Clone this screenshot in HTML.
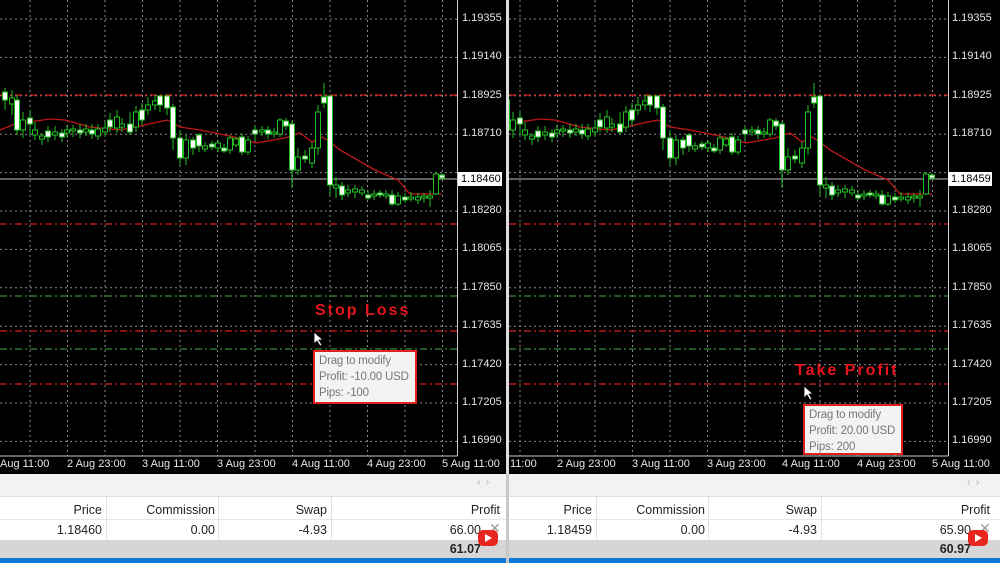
<!DOCTYPE html>
<html><head><meta charset="utf-8"><style>
body{margin:0;width:1000px;height:563px;overflow:hidden;background:#000;font-family:"Liberation Sans",sans-serif;position:relative}
.a{position:absolute}
.pl{font-size:11px;color:#e6e6e6}
.tl{font-size:11px;color:#e6e6e6;top:458px}
.tip{position:absolute;background:#f3f3f3;border:2px solid #e0201c;color:#777;font-size:11.5px;letter-spacing:-0.2px;line-height:16px;padding:1px 4px;box-sizing:border-box;white-space:nowrap;overflow:hidden}
.lbl{position:absolute;color:#e8161c;font-weight:bold;font-size:16px;letter-spacing:2px}
.cell{position:absolute;font-size:12.5px;color:#222;text-align:right}
</style></head><body>
<svg class="a" style="left:0;top:0" width="1000" height="475" id="s"></svg>
<div id="txt"></div>
<div class="a" style="left:0;top:474px;width:1000px;height:89px;background:#f2f2f2"></div>
<div class="a" style="left:0;top:496px;width:1000px;height:45px;background:#fff"></div>
<div class="a" style="left:0;top:496px;width:1000px;height:1px;background:#ddd"></div>
<div class="a" style="left:0;top:519px;width:1000px;height:1px;background:#e6e6e6"></div>
<div class="a" style="left:0;top:540px;width:1000px;height:18px;background:#d6d6d6"></div>
<div class="a" style="left:0;top:558px;width:1000px;height:5px;background:#0a78d6"></div>
<div class="a" style="left:506px;top:474px;width:3px;height:89px;background:#c8c8c8"></div>
<div class="a" style="left:106px;top:497px;width:1px;height:43px;background:#e2e2e2"></div>
<div class="a" style="left:218px;top:497px;width:1px;height:43px;background:#e2e2e2"></div>
<div class="a" style="left:331px;top:497px;width:1px;height:43px;background:#e2e2e2"></div>
<div class="a" style="left:596px;top:497px;width:1px;height:43px;background:#e2e2e2"></div>
<div class="a" style="left:708px;top:497px;width:1px;height:43px;background:#e2e2e2"></div>
<div class="a" style="left:821px;top:497px;width:1px;height:43px;background:#e2e2e2"></div>
<div class="a" style="left:477px;top:477px;font-size:10px;color:#aaa">‹ &nbsp;›</div>
<div class="a" style="left:967px;top:477px;font-size:10px;color:#aaa">‹ &nbsp;›</div>
<div class="cell" style="left:0;width:102px;top:503px">Price</div>
<div class="cell" style="left:110px;width:105px;top:503px">Commission</div>
<div class="cell" style="left:222px;width:105px;top:503px">Swap</div>
<div class="cell" style="left:335px;width:165px;top:503px">Profit</div>
<div class="cell" style="left:0;width:102px;top:523px">1.18460</div>
<div class="cell" style="left:110px;width:105px;top:523px">0.00</div>
<div class="cell" style="left:222px;width:105px;top:523px">-4.93</div>
<div class="cell" style="left:335px;width:146px;top:523px">66.00</div>
<div class="cell" style="left:335px;width:146px;top:542px;font-weight:bold">61.07</div>
<div class="cell" style="left:510px;width:82px;top:503px">Price</div>
<div class="cell" style="left:600px;width:105px;top:503px">Commission</div>
<div class="cell" style="left:712px;width:105px;top:503px">Swap</div>
<div class="cell" style="left:825px;width:165px;top:503px">Profit</div>
<div class="cell" style="left:510px;width:82px;top:523px">1.18459</div>
<div class="cell" style="left:600px;width:105px;top:523px">0.00</div>
<div class="cell" style="left:712px;width:105px;top:523px">-4.93</div>
<div class="cell" style="left:825px;width:146px;top:523px">65.90</div>
<div class="cell" style="left:825px;width:146px;top:542px;font-weight:bold">60.97</div>
<div class="a" style="left:489px;top:520px;font-size:14px;color:#999">✕</div>
<div class="a" style="left:979px;top:520px;font-size:14px;color:#999">✕</div>
<div class="a" style="left:478px;top:530px;width:20px;height:16px;border-radius:5px;background:#e8261f"></div>
<div class="a" style="left:485px;top:534px;width:0;height:0;border-left:7px solid #fff;border-top:4px solid transparent;border-bottom:4px solid transparent"></div>
<div class="a" style="left:968px;top:530px;width:20px;height:16px;border-radius:5px;background:#e8261f"></div>
<div class="a" style="left:975px;top:534px;width:0;height:0;border-left:7px solid #fff;border-top:4px solid transparent;border-bottom:4px solid transparent"></div>

<div class="lbl" style="left:315px;top:302px">Stop Loss</div>
<div class="tip" style="left:313px;top:350px;width:104px;height:54px">Drag to modify<br>Profit: -10.00 USD<br>Pips: -100</div>
<div class="lbl" style="left:795px;top:362px">Take Profit</div>
<div class="tip" style="left:803px;top:404px;width:100px;height:51px">Drag to modify<br>Profit: 20.00 USD<br>Pips: 200</div>
<svg class="a" style="left:313px;top:331px" width="20" height="20"><path d="M1 1 L1 13 L4 10 L7 15 L9 14 L6 9 L10 9 Z" fill="#fff" stroke="#000" stroke-width=".8"/></svg>
<svg class="a" style="left:803px;top:385px" width="20" height="20"><path d="M1 1 L1 13 L4 10 L7 15 L9 14 L6 9 L10 9 Z" fill="#fff" stroke="#000" stroke-width=".8"/></svg>
<script>
var s=document.getElementById('s'),h='';
var C=[[5,92,100,88,110,1],[12,98,104,90,115,0],[17,100,130,95,135,1],[23,120,130,112,138,0],[30,118,124,110,135,1],[35,130,135,122,140,0],[42,136,139,133,145,0],[48,131,137,126,142,1],[55,132,135,126,140,0],[62,133,137,129,142,1],[67,130,133,125,138,0],[73,129,131,125,137,0],[80,130,133,124,138,1],[86,129,132,124,136,0],[92,130,134,124,139,1],[98,129,136,124,140,0],[105,128,132,122,137,0],[110,120,127,113,132,1],[117,117,128,110,133,0],[122,124,127,118,132,0],[130,124,132,112,135,1],[136,112,127,106,132,0],[142,110,120,103,125,1],[148,105,110,97,115,0],[155,101,105,95,110,0],[160,96,105,95,112,1],[167,96,108,95,115,1],[173,107,138,104,150,1],[180,138,158,130,165,1],[186,140,158,135,165,0],[193,140,148,137,155,1],[199,135,146,133,152,1],[205,146,149,142,152,0],[212,144,147,141,150,1],[218,143,148,140,152,0],[224,148,151,144,153,1],[230,138,150,136,154,0],[236,139,145,137,147,0],[242,137,152,133,155,1],[248,140,152,136,155,0],[255,130,134,126,140,1],[262,130,132,126,136,0],[268,130,134,126,139,1],[274,132,134,128,138,0],[280,120,134,118,137,0],[286,121,126,118,130,1],[292,124,170,121,188,1],[298,157,170,148,175,0],[305,156,159,150,163,1],[312,148,163,142,168,0],[318,112,148,105,155,0],[324,97,103,83,108,1],[330,96,185,95,195,1],[336,185,188,177,198,0],[342,186,195,182,200,1],[348,190,193,185,197,0],[355,189,192,185,198,0],[362,190,193,186,196,0],[368,195,198,190,200,1],[374,194,196,190,200,0],[380,193,195,190,198,1],[386,194,196,190,199,0],[392,195,204,190,206,1],[398,196,204,192,206,0],[405,197,200,193,203,1],[411,197,199,192,202,0],[418,197,200,193,204,0],[424,196,198,193,203,0],[430,196,198,190,207,0],[436,174,194,172,195,0],[442,175,178,173,180,1]];
var MA=[[0,130],[15,124],[50,119],[65,120],[90,127],[120,130],[140,126],[158,122],[168,120],[180,127],[200,130],[230,136],[256,143],[285,138],[300,133],[312,142],[322,137],[330,142],[340,150],[375,170],[398,180],[410,194],[425,194],[442,194]];
function panel(off,x0,x1,ax){
 h+='<g><clipPath id="c'+off+'"><rect x="'+x0+'" y="0" width="'+(x1-x0)+'" height="456"/></clipPath>';
 h+='<g clip-path="url(#c'+off+')">';
 for(var i=0;i<12;i++){var y=19+i*38.4;h+='<line x1="'+x0+'" x2="'+x1+'" y1="'+y+'" y2="'+y+'" stroke="#8a8a8a" stroke-dasharray="2 3"/>';}
 for(var x=30;x<460;x+=37.5){var X=x+off;h+='<line x1="'+X+'" x2="'+X+'" y1="0" y2="456" stroke="#8a8a8a" stroke-dasharray="2 3"/>';}
 [[95,'#d42020'],[224,'#d42020'],[331,'#d42020'],[384,'#d42020'],[296,'#3a8a3a'],[349,'#3a8a3a']].forEach(function(l){h+='<line x1="'+x0+'" x2="'+x1+'" y1="'+l[0]+'" y2="'+l[0]+'" stroke="'+l[1]+'" stroke-dasharray="7 3 2 3" stroke-width="1.2"/>';});
 h+='<line x1="'+x0+'" x2="'+x1+'" y1="179" y2="179" stroke="#999" stroke-width="1.3"/>';
 h+='<polyline fill="none" stroke="#c01818" stroke-width="1.3" points="'+MA.map(function(p){return (p[0]+off)+','+p[1]}).join(' ')+'"/>';
 C.forEach(function(c){var X=c[0]+off;h+='<line x1="'+X+'" x2="'+X+'" y1="'+c[3]+'" y2="'+c[4]+'" stroke="#22c022"/>';h+='<rect x="'+(X-2.5)+'" y="'+c[1]+'" width="5" height="'+Math.max(2,c[2]-c[1])+'" fill="'+(c[5]?'#fff':'#000')+'" stroke="#22c022"/>';});
 h+='</g></g>';
 h+='<line x1="'+ax+'" x2="'+ax+'" y1="0" y2="456" stroke="#ccc"/><line x1="'+x0+'" x2="'+ax+'" y1="456" y2="456" stroke="#ccc"/>';
}
panel(0,0,457,457.5);
panel(490,509,948,948.5);
h+='<rect x="506" y="0" width="3" height="475" fill="#ddd"/>';
s.innerHTML=h;
var t='',P=['1.19355','1.19140','1.18925','1.18710','','1.18280','1.18065','1.17850','1.17635','1.17420','1.17205','1.16990'];
[[462,'1.18460'],[952,'1.18459']].forEach(function(a){
 P.forEach(function(p,i){if(p)t+='<div class="a pl" style="left:'+a[0]+'px;top:'+(12+i*38.4)+'px">'+p+'</div>';});
 t+='<div class="a" style="left:'+(a[0]-4)+'px;top:172px;background:#fff;color:#000;font-size:11px;padding:0 3px;width:38px;height:14px;line-height:14px">'+a[1]+'</div>';
});
var T=['2 Aug 23:00','3 Aug 11:00','3 Aug 23:00','4 Aug 11:00','4 Aug 23:00','5 Aug 11:00'];
t+='<div class="a tl" style="left:0">Aug 11:00</div><div class="a tl" style="left:510px">11:00</div>';
T.forEach(function(l,i){t+='<div class="a tl" style="left:'+(67+i*75)+'px">'+l+'</div><div class="a tl" style="left:'+(557+i*75)+'px">'+l+'</div>';});
document.getElementById('txt').innerHTML=t;
</script>
</body></html>
